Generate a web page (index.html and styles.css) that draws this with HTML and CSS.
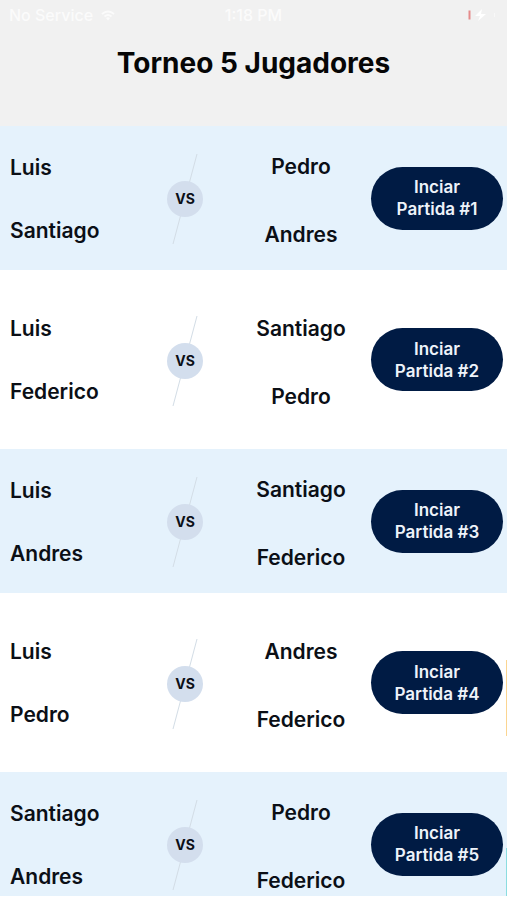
FILE: index.html
```html
<!DOCTYPE html>
<html lang="es">
<head>
<meta charset="utf-8">
<meta name="viewport" content="width=device-width, initial-scale=1">
<title>Torneo 5 Jugadores</title>
<link rel="stylesheet" href="styles.css">
</head>
<body>
<div class="app">
  <header class="header">
    <div class="status">
      <span class="carrier">No Service
        <svg class="wifi" viewBox="0 0 14 11" aria-hidden="true"><path d="M1 4Q7-1 13 4M3.5 6.5Q7 3.500 10.500 6.500" fill="none" stroke="currentColor" stroke-width="2"/><path d="M5 8Q7 6.500 9 8L7 10.500Z" fill="currentColor"/></svg>
      </span>
      <span class="time">1:18 PM</span>
      <svg class="battery" viewBox="0 0 30 14" aria-hidden="true"><rect x="0.500" y="2.500" width="2" height="9" fill="#e58b8b"/><path d="M14 1L7 8H12L10 13L18 6H13Z" fill="#fff"/><rect x="26" y="5" width="1" height="4" fill="#f8f8f8"/></svg>
    </div>
    <h1 class="title">Torneo 5 Jugadores</h1>
  </header>
  <main class="matches">
    <section class="match">
      <div class="team team-left"><span>Luis</span><span>Santiago</span></div>
      <div class="versus"><svg class="slash" viewBox="0 0 26 92" aria-hidden="true"><path d="M25 1L1 91"/></svg><span class="badge">VS</span></div>
      <div class="team team-right"><span>Pedro</span><span>Andres</span></div>
      <button class="start" type="button">Inciar<br>Partida #1</button>
    </section>
    <section class="match">
      <div class="team team-left"><span>Luis</span><span>Federico</span></div>
      <div class="versus"><svg class="slash" viewBox="0 0 26 92" aria-hidden="true"><path d="M25 1L1 91"/></svg><span class="badge">VS</span></div>
      <div class="team team-right"><span>Santiago</span><span>Pedro</span></div>
      <button class="start" type="button">Inciar<br>Partida #2</button>
    </section>
    <section class="match">
      <div class="team team-left"><span>Luis</span><span>Andres</span></div>
      <div class="versus"><svg class="slash" viewBox="0 0 26 92" aria-hidden="true"><path d="M25 1L1 91"/></svg><span class="badge">VS</span></div>
      <div class="team team-right"><span>Santiago</span><span>Federico</span></div>
      <button class="start" type="button">Inciar<br>Partida #3</button>
    </section>
    <section class="match">
      <div class="team team-left"><span>Luis</span><span>Pedro</span></div>
      <div class="versus"><svg class="slash" viewBox="0 0 26 92" aria-hidden="true"><path d="M25 1L1 91"/></svg><span class="badge">VS</span></div>
      <div class="team team-right"><span>Andres</span><span>Federico</span></div>
      <button class="start" type="button">Inciar<br>Partida #4</button>
      <i class="peek peek-orange"></i>
    </section>
    <section class="match">
      <div class="team team-left"><span>Santiago</span><span>Andres</span></div>
      <div class="versus"><svg class="slash" viewBox="0 0 26 92" aria-hidden="true"><path d="M25 1L1 91"/></svg><span class="badge">VS</span></div>
      <div class="team team-right"><span>Pedro</span><span>Federico</span></div>
      <button class="start" type="button">Inciar<br>Partida #5</button>
      <i class="peek peek-teal"></i>
    </section>
  </main>
</div>
</body>
</html>
```

FILE: styles.css
```css
* {
  box-sizing: border-box;
}

body {
  margin: 0;
  background: #fff;
  color: #0b0f16;
  font-family: Inter, "Liberation Sans", sans-serif;
}

.app {
  display: flex;
  flex-direction: column;
  height: 100vh;
  padding-bottom: 4px;
}

.header {
  flex: none;
  padding: 5px 0 44px;
  background: #f1f1f1;
}

.status {
  display: grid;
  grid-template-columns: 1fr auto 1fr;
  align-items: center;
  height: 20px;
  padding: 0 9px;
  color: #fbfbfb;
  font-size: 16px;
  font-weight: 500;
  line-height: 20px;
}

.carrier {
  display: flex;
  align-items: center;
  gap: 8px;
}

.wifi {
  width: 14px;
  height: 11px;
}

.battery {
  justify-self: end;
  width: 30px;
  height: 14px;
}

.title {
  margin: 19px 0 0;
  color: #060606;
  font-size: 28px;
  font-weight: 700;
  line-height: 38px;
  text-align: center;
}

.matches {
  flex: 1;
  min-height: 0;
  overflow: hidden;
}

.match {
  position: relative;
  display: grid;
  grid-template-columns: 129fr 92fr 140fr 132px;
  align-items: center;
  height: 144px;
  padding: 0 4px 0 10px;
  background: #e5f2fc;
}

.match:nth-child(even) {
  height: 179px;
  background: #fff;
}

.team {
  display: flex;
  flex-direction: column;
  font-size: 21px;
  font-weight: 600;
  line-height: 28px;
}

.team-left {
  gap: 35px;
  padding-top: 2px;
}

.team-right {
  gap: 40px;
  padding-top: 6px;
  text-align: center;
}

.versus {
  display: grid;
  place-items: center;
  padding-top: 2px;
}

.slash,
.badge {
  grid-area: 1 / 1;
}

.slash {
  width: 26px;
  height: 92px;
  fill: none;
  stroke: #d3dde6;
  stroke-width: 1;
}

.badge {
  width: 36px;
  height: 36px;
  border-radius: 50%;
  background: #d3deed;
  font-size: 14px;
  font-weight: 700;
  line-height: 36px;
  text-align: center;
}

.start {
  height: 63px;
  padding: 0;
  border: 0;
  border-radius: 32px;
  background: #001b44;
  color: #eef3fa;
  font: inherit;
  font-size: 17px;
  font-weight: 600;
  line-height: 22px;
}

.peek {
  position: absolute;
  right: 0;
  width: 1px;
}

.peek-orange {
  top: 67px;
  height: 76px;
  background: #fbd591;
}

.peek-teal {
  top: 76px;
  bottom: 0;
  background: #8bdde0;
}
```
